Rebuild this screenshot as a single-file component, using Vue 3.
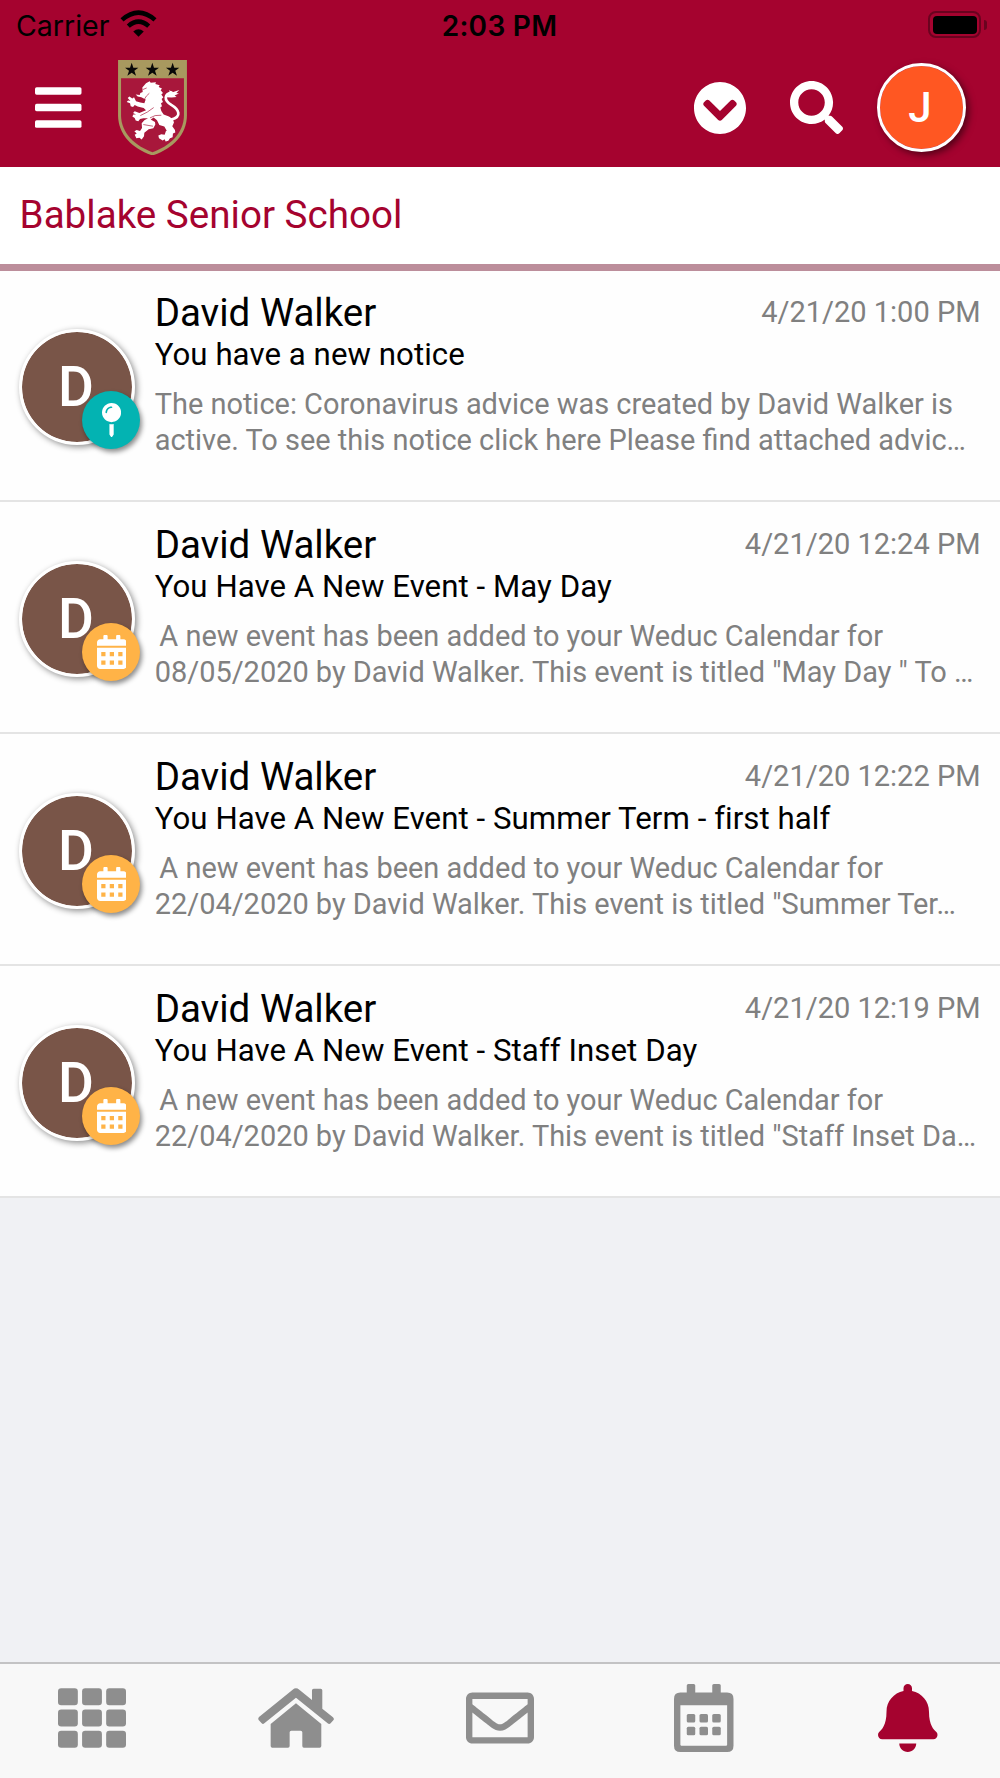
<script setup>
import { ref } from 'vue';

const schoolName = ref('Bablake Senior School');

const notifications = ref([
  {
    id: 1,
    type: 'notice',
    sender: 'David Walker',
    date: '4/21/20 1:00 PM',
    subject: 'You have a new notice',
    lines: [
      'The notice: Coronavirus advice was created by David Walker is',
      'active. To see this notice click here Please find attached advic…',
    ],
  },
  {
    id: 2,
    type: 'event',
    sender: 'David Walker',
    date: '4/21/20 12:24 PM',
    subject: 'You Have A New Event - May Day',
    lines: [
      ' A new event has been added to your Weduc Calendar for',
      '08/05/2020 by David Walker. This event is titled "May Day " To …',
    ],
  },
  {
    id: 3,
    type: 'event',
    sender: 'David Walker',
    date: '4/21/20 12:22 PM',
    subject: 'You Have A New Event - Summer Term - first half',
    lines: [
      ' A new event has been added to your Weduc Calendar for',
      '22/04/2020 by David Walker. This event is titled "Summer Ter…',
    ],
  },
  {
    id: 4,
    type: 'event',
    sender: 'David Walker',
    date: '4/21/20 12:19 PM',
    subject: 'You Have A New Event - Staff Inset Day',
    lines: [
      ' A new event has been added to your Weduc Calendar for',
      '22/04/2020 by David Walker. This event is titled "Staff Inset Da…',
    ],
  },
]);
</script>

<template>
  <div class="app">
    <header class="header">
      <div class="status-bar">
        <div class="carrier">
          <span>Carrier</span>
          <svg class="wifi" viewBox="0 0 110 82">
            <path d="M55 81L39 65Q55 52 71 65Z" />
            <path d="M24 49Q55 22 86 49" fill="none" stroke="#000" stroke-width="14" />
            <path d="M5 30Q55 -14 105 30" fill="none" stroke="#000" stroke-width="14" />
          </svg>
        </div>
        <span class="clock">2:03 PM</span>
        <div class="battery">
          <div class="battery-body"><div class="battery-fill"></div></div>
          <div class="battery-nub"></div>
        </div>
      </div>

      <nav class="nav-bar">
        <svg class="bars" viewBox="0 0 448 392">
          <rect width="448" height="72" rx="16" />
          <rect y="160" width="448" height="72" rx="16" />
          <rect y="320" width="448" height="72" rx="16" />
        </svg>

        <svg class="crest" viewBox="354 179 207 287">
          <path d="M354 179H561V345C561 405 515 447 457.500 466C400 447 354 405 354 345Z" fill="#a8995f" />
          <path d="M363 234H552V345C552 399 509 438 457.500 456C406 438 363 399 363 345Z" fill="#a8173b" />
          <g fill="#080808">
            <path d="M395 187L400 202H415L403 211L408 226L395 217L382 226L387 211L375 202H390Z" />
            <path d="M457 187L462 202H477L465 211L470 226L457 217L444 226L449 211L437 202H452Z" />
            <path d="M518 187L523 202H538L526 211L531 226L518 217L505 226L510 211L498 202H513Z" />
          </g>
          <path
            fill="#fff"
            d="M427 262L438 249L449 243L452 247L468 246L466 251L479 255L476 260L486 265L482 270L489 278L484 283L490 291L485 296L489 305L483 309L486 318L481 322L484 332L491 343L507 349L519 357L522 367L517 378L525 389L526 397L519 400L518 411L510 414L505 422L497 424L494 417L488 421L477 414L475 406L484 402L494 404L499 389L493 379L478 374L471 360L461 352L452 358L465 365L466 373L460 384L446 387L433 398L432 408L425 418L418 413L409 414L404 404L410 400L403 393L410 389L420 392L426 383L425 369L433 360L444 354L430 354L420 356L415 363L407 361L404 353L397 349L400 343L408 343L399 338L404 333L418 338L438 330L431 323L413 319L404 314L399 320L392 318L390 309L380 305L384 301L391 302L383 293L388 289L397 295L402 291L408 303L421 307L433 309L437 298L424 291L413 289L407 283L419 284L421 278L428 275Z"
          />
          <path d="M514 358C548 349 536 327 514 314C490 298 493 281 516 277" fill="none" stroke="#fff" stroke-width="8" />
          <path d="M498 291L511 279L507 270L520 275L538 269L529 278L537 280L524 286L530 290L515 292Z" fill="#fff" />
          <path d="M448 279Q438 286 432 299M461 322Q443 337 421 346M484 345Q464 343 450 353M440 263L428 268M430 373L459 378M482 385L500 391" fill="none" stroke="#a8173b" stroke-width="2" />
        </svg>

        <div class="nav-actions">
          <svg class="chevron" viewBox="8 8 496 496">
            <path d="M504 256c0 137-111 248-248 248S8 393 8 256 119 8 256 8s248 111 248 248zM273 369.900l135.500-135.500c9.400-9.400 9.400-24.600 0-33.900l-17-17c-9.400-9.400-24.600-9.400-33.900 0L256 285.100 154.400 183.500c-9.400-9.400-24.600-9.400-33.900 0l-17 17c-9.400 9.400-9.400 24.600 0 33.900L239 369.900c9.400 9.400 24.600 9.400 34 0z" />
          </svg>
          <svg class="search" viewBox="0 0 512 512">
            <path d="M505 442.700L405.300 343c-4.500-4.500-10.600-7-17-7H372c27.600-35.300 44-79.700 44-128C416 93.100 322.900 0 208 0S0 93.100 0 208s93.100 208 208 208c48.300 0 92.700-16.400 128-44v16.300c0 6.400 2.500 12.500 7 17l99.700 99.700c9.400 9.400 24.600 9.400 33.900 0l28.300-28.300c9.400-9.400 9.400-24.600.1-34zM208 336c-70.700 0-128-57.200-128-128 0-70.700 57.200-128 128-128 70.700 0 128 57.200 128 128 0 70.700-57.200 128-128 128z" />
          </svg>
          <div class="user"><span>J</span></div>
        </div>
      </nav>
    </header>

    <h1 class="school">{{ schoolName }}</h1>

    <main class="list">
      <article v-for="item in notifications" :key="item.id" class="item">
        <div class="avatar">
          <span>{{ item.sender[0] }}</span>
          <div class="badge" :class="item.type">
            <svg v-if="item.type === 'notice'" viewBox="0 0 288 512">
              <path d="M112 316.940v156.690l22.020 33.020c4.750 7.120 15.220 7.120 19.970 0L176 473.630V316.940c-10.390 1.920-21.060 3.060-32 3.060s-21.610-1.140-32-3.060zM144 0C64.470 0 0 64.470 0 144s64.470 144 144 144 144-64.470 144-144S223.530 0 144 0zm0 76c-37.500 0-68 30.500-68 68 0 6.620-5.380 12-12 12s-12-5.380-12-12c0-50.730 41.280-92 92-92 6.620 0 12 5.380 12 12s-5.380 12-12 12z" />
            </svg>
            <svg v-else viewBox="0 0 448 512">
              <path d="M400 64h-48V16c0-8.800-7.200-16-16-16h-32c-8.800 0-16 7.200-16 16v48H160V16c0-8.800-7.200-16-16-16h-32c-8.800 0-16 7.200-16 16v48H48C21.500 64 0 85.500 0 112v48h448v-48c0-26.500-21.500-48-48-48z" />
              <path fill-rule="evenodd" d="M0 192h448v272c0 26.500-21.500 48-48 48H48c-26.500 0-48-21.500-48-48zM64 256v64h64v-64zM192 256v64h64v-64zM320 256v64h64v-64zM64 384v64h64v-64zM192 384v64h64v-64zM320 384v64h64v-64z" />
            </svg>
          </div>
        </div>

        <div class="content">
          <div class="top-row">
            <h2 class="sender">{{ item.sender }}</h2>
            <span class="date">{{ item.date }}</span>
          </div>
          <p class="subject">{{ item.subject }}</p>
          <div class="preview">
            <p v-for="line in item.lines" :key="line" :class="{ indented: line.startsWith(' ') }">{{ line }}</p>
          </div>
        </div>
      </article>
    </main>

    <footer class="tabs">
      <div class="tab">
        <svg width="68" height="68" viewBox="0 0 512 512">
          <template v-for="y in [32, 192, 352]" :key="y">
            <rect v-for="x in [0, 181.33, 362.67]" :key="x" :x="x" :y="y" width="149.33" height="128" rx="24" />
          </template>
        </svg>
      </div>
      <div class="tab">
        <svg width="76.300" height="68" viewBox="0 0 229 204">
          <path d="M104 17Q114 9 124 17L162 48V19Q162 14 167 14H188Q193 14 193 19V74L225 100Q230 105 226 109L218 118Q214 122 209 118L114 41L19 118Q15 122 11 118L2 108Q-1 104 3 99Z" />
          <path d="M114 58L190 120V186Q190 191 185 191H138Q133 191 133 186V145Q133 140 128 140H100Q95 140 95 145V186Q95 191 90 191H43Q38 191 38 186V120Z" />
        </svg>
      </div>
      <div class="tab">
        <svg width="68" height="68" viewBox="0 0 512 512">
          <path d="M464 64H48C21.490 64 0 85.490 0 112v288c0 26.510 21.490 48 48 48h416c26.510 0 48-21.490 48-48V112c0-26.510-21.490-48-48-48zm0 48v40.805c-22.422 18.259-58.168 46.651-134.587 106.490-16.841 13.247-50.201 45.072-73.413 44.701-23.208.375-56.579-31.459-73.413-44.701C106.180 199.465 70.425 171.067 48 152.805V112h416zM48 400V214.398c22.914 18.251 55.409 43.862 104.938 82.646 21.857 17.205 60.134 55.186 103.062 54.955 42.717.231 80.509-37.199 103.053-54.947 49.528-38.783 82.032-64.401 104.947-82.653V400H48z" />
        </svg>
      </div>
      <div class="tab">
        <svg width="59.500" height="68" viewBox="0 0 448 512">
          <path fill-rule="evenodd" d="M96 64V12Q96 0 108 0H148Q160 0 160 12V64H288V12Q288 0 300 0H340Q352 0 352 12V64H400Q448 64 448 112V464Q448 512 400 512H48Q0 512 0 464V112Q0 64 48 64ZM48 160V458Q48 464 54 464H394Q400 464 400 458V160Z" />
          <template v-for="y in [226, 322]" :key="y">
            <rect v-for="x in [96, 192, 288]" :key="x" :x="x" :y="y" width="64" height="64" rx="12" />
          </template>
        </svg>
      </div>
      <div class="tab active">
        <svg width="59.500" height="68" viewBox="0 0 448 512">
          <path d="M224 512c35.320 0 63.970-28.650 63.970-64H160.030c0 35.350 28.650 64 63.970 64zm215.390-149.710c-19.320-20.760-55.470-51.990-55.470-154.290 0-77.700-54.480-139.900-127.940-155.160V32c0-17.670-14.320-32-31.980-32s-31.980 14.330-31.980 32v20.840C118.560 68.100 64.080 130.300 64.080 208c0 102.300-36.150 133.530-55.470 154.290-6 6.450-8.660 14.160-8.610 21.710.11 16.400 12.980 32 32.100 32h383.800c19.120 0 32-15.600 32.100-32 .05-7.550-2.610-15.270-8.610-21.710z" />
        </svg>
      </div>
    </footer>
  </div>
</template>

<style>
body {
  margin: 0;
}
</style>

<style scoped>
* {
  box-sizing: border-box;
}

.app {
  width: 1000px;
  height: 1778px;
  display: flex;
  flex-direction: column;
  overflow: hidden;
  background: #f0f1f4;
  font-family: Roboto, sans-serif;
}

h1,
h2,
p {
  margin: 0;
  font-weight: 400;
}

svg {
  display: block;
  flex-shrink: 0;
}

.header {
  height: 166.500px;
  flex-shrink: 0;
  background: #a5032f;
}

.status-bar {
  display: grid;
  grid-template-columns: 1fr auto 1fr;
  align-items: center;
  height: 49px;
  padding: 0 13px 0 16px;
  font-family: Inter, sans-serif;
  font-size: 28px;
  color: #000;
}

.carrier {
  display: flex;
  align-items: center;
  gap: 11px;
  padding-top: 2px;
  font-size: 28.500px;
}

.wifi {
  width: 37px;
  height: 27px;
  margin-top: -4px;
}

.clock {
  padding-top: 2px;
  margin-right: 4px;
  font-weight: 600;
  letter-spacing: 0.3px;
}

.battery {
  display: flex;
  align-items: center;
  justify-content: flex-end;
  gap: 3px;
}

.battery-body {
  width: 53px;
  height: 27px;
  padding: 2.500px;
  border: 2px solid #6a031f;
  border-radius: 8px;
}

.battery-fill {
  height: 100%;
  border-radius: 4px;
  background: #000;
}

.battery-nub {
  width: 3px;
  height: 10px;
  border-radius: 0 5px 5px 0;
  background: #6a031f;
}

.nav-bar {
  display: flex;
  align-items: center;
  height: 117px;
  padding: 0 34px 0 35px;
}

.nav-bar svg {
  fill: #fff;
}

.bars {
  width: 46.500px;
  height: 41px;
}

.crest {
  width: 69px;
  height: 95.500px;
  margin-left: 36.500px;
}

.nav-actions {
  display: flex;
  align-items: center;
  margin-left: auto;
}

.chevron {
  width: 52px;
  height: 52px;
}

.search {
  width: 53px;
  height: 53px;
  margin: 0 34px 0 44px;
}

.user {
  display: flex;
  align-items: center;
  justify-content: center;
  width: 89px;
  height: 89px;
  padding-right: 3px;
  border: 3px solid #fff;
  border-radius: 50%;
  background: #ff5722;
  background-clip: padding-box;
  box-shadow: 3px 3px 7px rgba(0, 0, 0, 0.5);
  color: #fff;
  font-size: 42px;
  font-weight: 500;
}

.school {
  height: 104px;
  flex-shrink: 0;
  padding: 0 19.600px;
  border-bottom: 7.500px solid #bc8e9b;
  background: #fff;
  color: #a5032f;
  font-size: 38.600px;
  line-height: 96px;
}

.item {
  display: flex;
  height: 231.900px;
  padding: 20.400px 19.500px 0 19.400px;
  border-bottom: 2px solid #e4e4e4;
  background: #fefefe;
}

.avatar {
  position: relative;
  display: flex;
  align-items: center;
  justify-content: center;
  flex-shrink: 0;
  width: 116px;
  height: 116px;
  margin-top: 38px;
  padding-right: 3px;
  border: 3px solid #fff;
  border-radius: 50%;
  background: #795548;
  background-clip: padding-box;
  box-shadow: 2px 2px 6px rgba(0, 0, 0, 0.45);
  color: #fff;
  font-size: 55px;
  font-weight: 500;
}

.badge {
  position: absolute;
  right: -8px;
  bottom: -7px;
  display: flex;
  align-items: center;
  justify-content: center;
  width: 58px;
  height: 58px;
  border-radius: 50%;
  box-shadow: 2px 3px 5px rgba(0, 0, 0, 0.45);
}

.badge svg {
  height: 34px;
  fill: #fff;
}

.notice {
  background: #03b3b2;
}

.event {
  background: #ffb347;
}

.content {
  flex: 1;
  min-width: 0;
  padding-left: 19.300px;
}

.top-row {
  display: flex;
  justify-content: space-between;
}

.sender {
  font-size: 38.500px;
  line-height: 44px;
  color: #000;
}

.date {
  padding-top: 3px;
  font-size: 29px;
  line-height: 36px;
  color: #808080;
}

.subject {
  margin-top: 1px;
  font-size: 31.200px;
  line-height: 38px;
  letter-spacing: 0.060px;
  color: #000;
}

.preview {
  margin-top: 12px;
  font-size: 28.950px;
  line-height: 36.200px;
  color: #808080;
  white-space: pre;
}

.indented {
  text-indent: -2.500px;
}

.tabs {
  display: flex;
  flex-shrink: 0;
  height: 116px;
  margin: auto -10px 0;
  padding-top: 19.500px;
  border-top: 2px solid #c3c3c4;
  background: #f8f8f8;
}

.tab {
  flex: 1;
  display: flex;
  justify-content: center;
  fill: #8e8e8e;
}

.tab.active {
  fill: #a5032f;
}
</style>
